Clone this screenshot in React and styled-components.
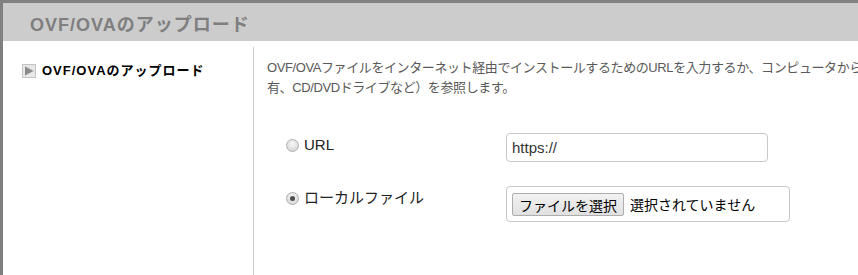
import React from 'react';
import styled, { createGlobalStyle } from 'styled-components';

const GlobalStyle = createGlobalStyle`
  html, body {
    margin: 0;
    padding: 0;
    background: #808080;
    overflow: hidden;
  }
  body {
    font-family: "Liberation Sans", "Noto Sans CJK JP", sans-serif;
  }
`;

const Page = styled.div`
  width: 858px;
  height: 275px;
  overflow: hidden;
  padding: 3px 0 0 3px;
  box-sizing: border-box;
`;

const Dialog = styled.div`
  width: 1100px;
  height: 400px;
  background: #fff;
  display: flex;
  flex-direction: column;
`;

const Header = styled.div`
  height: 38px;
  background: #cccccc;
  display: flex;
  align-items: center;
  padding-left: 27px;
  padding-top: 1px;
  box-sizing: border-box;

  h1 {
    margin: 0;
    font-size: 18px;
    font-weight: bold;
    color: #7f7f7f;
    letter-spacing: 1px;
  }
`;

const Body = styled.div`
  flex: 1;
  display: flex;
  padding-top: 6px;
`;

const Nav = styled.div`
  width: 231px;
  flex-shrink: 0;
  border-right: 1px solid #cccccc;
  padding: 15px 0 0 19px;
`;

const NavItem = styled.div`
  display: flex;
  align-items: center;
  gap: 6px;
  font-size: 13px;
  font-weight: bold;
  color: #000;
  line-height: 18px;
  white-space: nowrap;
  letter-spacing: 1px;
`;

const Arrow = styled.span`
  width: 14px;
  height: 14px;
  display: inline-flex;
  svg {
    display: block;
  }
`;

const Content = styled.div`
  flex: 1;
  padding: 11px 0 0 13px;
`;

const Desc = styled.p`
  margin: 0;
  font-size: 13px;
  line-height: 20px;
  color: #595959;
  white-space: nowrap;
  letter-spacing: -0.4px;
`;

const Form = styled.div`
  margin-top: 35px;
  padding-left: 19px;
  display: flex;
  flex-direction: column;
  gap: 24px;
`;

const Row = styled.div`
  display: grid;
  grid-template-columns: 220px auto;
  align-items: start;
`;

const Label = styled.label`
  display: flex;
  align-items: center;
  gap: 5px;
  margin-top: 2px;
  font-size: 15px;
  line-height: 20px;
  color: #222;
`;

const Radio = styled.span`
  width: 13px;
  height: 13px;
  border-radius: 50%;
  box-sizing: border-box;
  border: 1px solid #b0b0b0;
  background: radial-gradient(circle at 50% 35%, #f6f6f6 0%, #e0e0e0 60%, #cdcdcd 100%);
  display: inline-flex;
  align-items: center;
  justify-content: center;
  flex-shrink: 0;

  &::after {
    content: '';
    width: 5px;
    height: 5px;
    border-radius: 50%;
    background: ${p => (p.$checked ? '#4d4d4d' : 'transparent')};
  }
`;

const TextInput = styled.div`
  width: 262px;
  height: 29px;
  box-sizing: border-box;
  border: 1px solid #c8c8c8;
  border-radius: 4px;
  padding-left: 5px;
  display: flex;
  align-items: center;
  font-size: 15px;
  color: #333;
`;

const FileBox = styled.div`
  width: 284px;
  height: 36px;
  box-sizing: border-box;
  border: 1px solid #c8c8c8;
  border-radius: 4px;
  padding: 5px;
  display: flex;
  align-items: center;
  gap: 6px;
  font-size: 14px;
  color: #000;
`;

const FileButton = styled.span`
  width: 112px;
  height: 23px;
  box-sizing: border-box;
  border: 1px solid #adadad;
  border-radius: 2px;
  background: linear-gradient(#f2f2f2, #e0e0e0);
  display: inline-flex;
  align-items: center;
  justify-content: center;
  font-size: 14px;
  color: #000;
  margin-top: 1px;
`;

const App = () => (
  <>
    <GlobalStyle />
    <Page>
      <Dialog>
        <Header>
          <h1>OVF/OVAのアップロード</h1>
        </Header>
        <Body>
          <Nav>
            <NavItem>
              <Arrow>
                <svg width="14" height="14" viewBox="0 0 14 14">
                  <rect x="0.5" y="0.5" width="13" height="13" fill="#e8e8e8" stroke="#c4c4c4" />
                  <path d="M3 2.5 L11.5 7 L3 11.5 Z" fill="#8a8a8a" />
                  <path d="M3 2.5 L11.5 7" stroke="#b0b0b0" strokeWidth="0.8" />
                </svg>
              </Arrow>
              OVF/OVAのアップロード
            </NavItem>
          </Nav>
          <Content>
            <Desc>
              OVF/OVAファイルをインターネット経由でインストールするためのURLを入力するか、コンピュータから
              <br />
              有、CD/DVDドライブなど）を参照します。
            </Desc>
            <Form>
              <Row>
                <Label>
                  <Radio />
                  URL
                </Label>
                <TextInput>https://</TextInput>
              </Row>
              <Row>
                <Label>
                  <Radio $checked />
                  ローカルファイル
                </Label>
                <FileBox>
                  <FileButton>ファイルを選択</FileButton>
                  選択されていません
                </FileBox>
              </Row>
            </Form>
          </Content>
        </Body>
      </Dialog>
    </Page>
  </>
);

export default App;
